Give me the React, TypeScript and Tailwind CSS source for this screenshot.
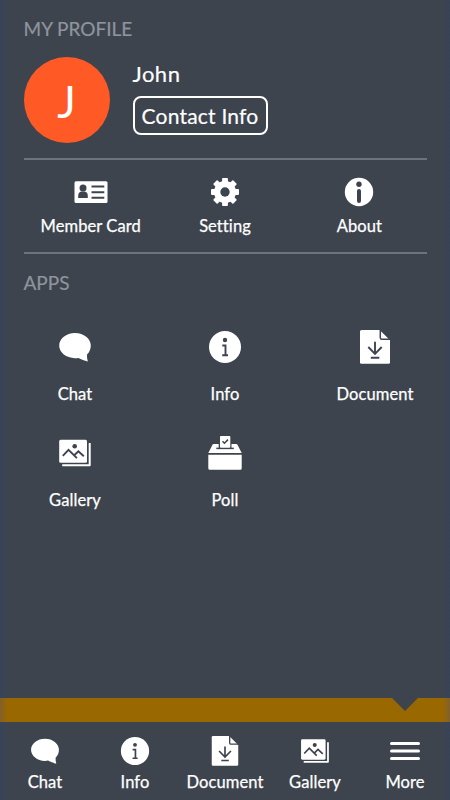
import type { ReactNode } from "react";

type IconProps = { className?: string };

const BG = "#3e444e";

function ChatIcon({ className }: IconProps) {
  return (
    <svg viewBox="0 0 34 34" className={className} fill="white">
      <path d="M17 3C8.200 3 1.200 8.600 1.200 15.600S8.200 28.200 17 28.200c1.200 0 2.400-.1 3.500-.3 2.700 1.400 5.900 2.700 9.300 3.500-.7-2.200-.9-4.500-.8-6.800 2.400-2.300 3.800-5.400 3.800-9C32.800 8.600 25.800 3 17 3Z" />
    </svg>
  );
}

function InfoIcon({ className }: IconProps) {
  return (
    <svg viewBox="0 0 34 34" className={className}>
      <circle cx="17" cy="17" r="16" fill="white" />
      <circle cx="17" cy="10" r="2.200" fill={BG} />
      <path d="M14.300 15.500h3.200v9.400M14.200 25.200h5.800" fill="none" stroke={BG} strokeWidth="1.900" />
    </svg>
  );
}

function DocumentIcon({ className }: IconProps) {
  return (
    <svg viewBox="0 0 34 34" className={className}>
      <path d="M3.500 0h18.200l10.300 10.300v21.900a1.500 1.500 0 0 1-1.500 1.500h-27A1.500 1.500 0 0 1 2 32.200V1.500A1.500 1.500 0 0 1 3.500 0Z" fill="white" />
      <path d="M22.300 0v7.800a1.500 1.500 0 0 0 1.500 1.500H32" fill="none" stroke={BG} strokeWidth="1.500" />
      <path d="M17 11.800v11.800M10.300 17l6.700 6.800 6.700-6.800M12.800 27.800h8.500" fill="none" stroke={BG} strokeWidth="1.900" />
    </svg>
  );
}

function GalleryIcon({ className }: IconProps) {
  return (
    <svg viewBox="0 0 34 34" className={className}>
      <rect x="1.200" y="3.800" width="27.800" height="23" rx="1.500" fill="white" />
      <path d="M4.200 29.200h27.500V7" fill="none" stroke="white" strokeWidth="2" strokeLinejoin="round" />
      <circle cx="16.700" cy="10.200" r="2.300" fill={BG} />
      <path d="M4.800 19.800l5.700-6 8.400 8.400M16.200 19.300l4.200-4 5.400 5" fill="none" stroke={BG} strokeWidth="1.900" />
    </svg>
  );
}

function PollIcon({ className }: IconProps) {
  return (
    <svg viewBox="0 0 34 34" className={className}>
      <path d="M5.800 8h22.400q.9 0 1.300.8l4.200 8.300H.3l4.200-8.300Q4.900 8 5.800 8Z" fill="white" />
      <path d="M.3 18.700h33.400v13.500a1.500 1.500 0 0 1-1.500 1.500H1.800a1.500 1.500 0 0 1-1.500-1.500V18.700Z" fill="white" />
      <path d="M10.700 7h12.800v5H10.700z" fill={BG} />
      <path d="M8.300 12.400h17.500" stroke={BG} strokeWidth="1.500" />
      <rect x="12" y="0" width="10.300" height="11.800" rx=".8" fill="white" />
      <path d="M14.500 5.300l1.900 1.900 3.600-3.600" fill="none" stroke={BG} strokeWidth="1.500" />
    </svg>
  );
}

function CardIcon({ className }: IconProps) {
  return (
    <svg viewBox="0 0 34 34" className={className}>
      <rect x=".5" y="6.200" width="33" height="21.800" rx="1.500" fill="white" />
      <circle cx="9" cy="13" r="3.500" fill={BG} />
      <path d="M4.200 22.900v-2.100c0-2.600 1.400-4 3-4.300h3.600c1.600.3 3 1.700 3 4.300v2.100Z" fill={BG} />
      <path d="M17.500 11.500h12.800M17.500 17.200h12.800M17.500 22.800h12.800" stroke={BG} strokeWidth="1.900" />
    </svg>
  );
}

function GearIcon({ className }: IconProps) {
  return (
    <svg viewBox="0 0 34 34" className={className}>
      <g fill="white">
        <circle cx="17" cy="17" r="11" />
        {[0, 45, 90, 135].map((angle) => (
          <rect
            key={angle}
            x="14.100"
            y="3"
            width="5.800"
            height="28"
            rx=".8"
            transform={`rotate(${angle} 17 17)`}
          />
        ))}
      </g>
      <circle cx="17" cy="17" r="4.700" fill={BG} />
    </svg>
  );
}

function AboutIcon({ className }: IconProps) {
  return (
    <svg viewBox="0 0 34 34" className={className}>
      <circle cx="17" cy="17" r="14.200" fill="white" />
      <circle cx="17" cy="9.300" r="2.700" fill={BG} />
      <rect x="15" y="14" width="4" height="14" rx="2" fill={BG} />
    </svg>
  );
}

function MenuIcon({ className }: IconProps) {
  return (
    <svg viewBox="0 0 30 30" className={className}>
      <path d="M1.500 7.500h27M1.500 15h27M1.500 22.500h27" stroke="white" strokeWidth="3" strokeLinecap="round" />
    </svg>
  );
}

const actions = [
  { label: "Member Card", Icon: CardIcon },
  { label: "Setting", Icon: GearIcon },
  { label: "About", Icon: AboutIcon },
];

const apps = [
  { label: "Chat", Icon: ChatIcon },
  { label: "Info", Icon: InfoIcon },
  { label: "Document", Icon: DocumentIcon },
  { label: "Gallery", Icon: GalleryIcon },
  { label: "Poll", Icon: PollIcon },
];

const tabs = [
  { label: "Chat", Icon: ChatIcon },
  { label: "Info", Icon: InfoIcon },
  { label: "Document", Icon: DocumentIcon },
  { label: "Gallery", Icon: GalleryIcon },
  { label: "More", Icon: MenuIcon },
];

function SectionTitle({ children }: { children: ReactNode }) {
  return <h2 className="text-[19px] leading-6 text-[#8f949d] [-webkit-text-stroke:0.2px_#8f949d]">{children}</h2>;
}

function Label({ children }: { children: ReactNode }) {
  return (
    <span className="text-[16.5px] leading-6 tracking-[0.08px] [-webkit-text-stroke:0.25px_white]">
      {children}
    </span>
  );
}

export default function App() {
  return (
    <div className="flex h-[800px] w-[450px] flex-col overflow-hidden bg-[linear-gradient(to_right,#394358_0px,#3c4451_6px,#3e444e_12px,#3e444e_442px,#384357_450px)] font-['Lato','Open_Sans',sans-serif] font-normal text-white">
      <main className="flex-1">
        <section className="mx-[23.5px] h-[160px] border-b-2 border-[#6c737c] pt-[17px]">
          <SectionTitle>MY PROFILE</SectionTitle>
          <div className="mt-4 flex items-start">
            <div className="flex size-[86px] items-center justify-center rounded-full bg-[#ff5a26] pt-0.5 text-[44px] leading-none">
              J
            </div>
            <div className="ml-[23px] flex flex-col items-start pt-[3px]">
              <span className="text-[22px] leading-7 tracking-[0.5px] [-webkit-text-stroke:0.2px_white]">John</span>
              <button className="mt-2 h-[39px] w-[135px] rounded-lg border-2 border-white text-[21px] tracking-[0.2px] whitespace-nowrap [-webkit-text-stroke:0.2px_white]">
                Contact Info
              </button>
            </div>
          </div>
        </section>

        <section className="mx-[23.5px] grid h-[94px] grid-cols-3 border-b-2 border-[#6c737c] pt-[15px]">
          {actions.map(({ label, Icon }) => (
            <button key={label} className="flex flex-col items-center gap-[5px]">
              <Icon className="size-[34px]" />
              <Label>{label}</Label>
            </button>
          ))}
        </section>

        <section className="pt-[17px]">
          <div className="mx-[23.5px]">
            <SectionTitle>APPS</SectionTitle>
          </div>
          <div className="mt-[35px] grid grid-cols-3">
            {apps.map(({ label, Icon }) => (
              <button key={label} className="flex h-[106px] flex-col items-center gap-[18px]">
                <Icon className="size-[34px]" />
                <Label>{label}</Label>
              </button>
            ))}
          </div>
        </section>
      </main>

      {/* strip with the pointer towards the open tab */}
      <div className="flex h-6 justify-end bg-[linear-gradient(to_right,#80602c_0px,#9a6800_7px,#9a6800_443px,#806030_450px)] pr-8">
        <svg viewBox="0 0 26 13" className="h-[13px] w-[26px]" fill={BG}>
          <path d="M0 0h26L13 13Z" />
        </svg>
      </div>

      <nav className="grid h-[78px] grid-cols-5 pt-[14px]">
        {tabs.map(({ label, Icon }) => (
          <button key={label} className="flex flex-col items-center gap-1">
            <Icon className="size-[30px]" />
            <Label>{label}</Label>
          </button>
        ))}
      </nav>
    </div>
  );
}
